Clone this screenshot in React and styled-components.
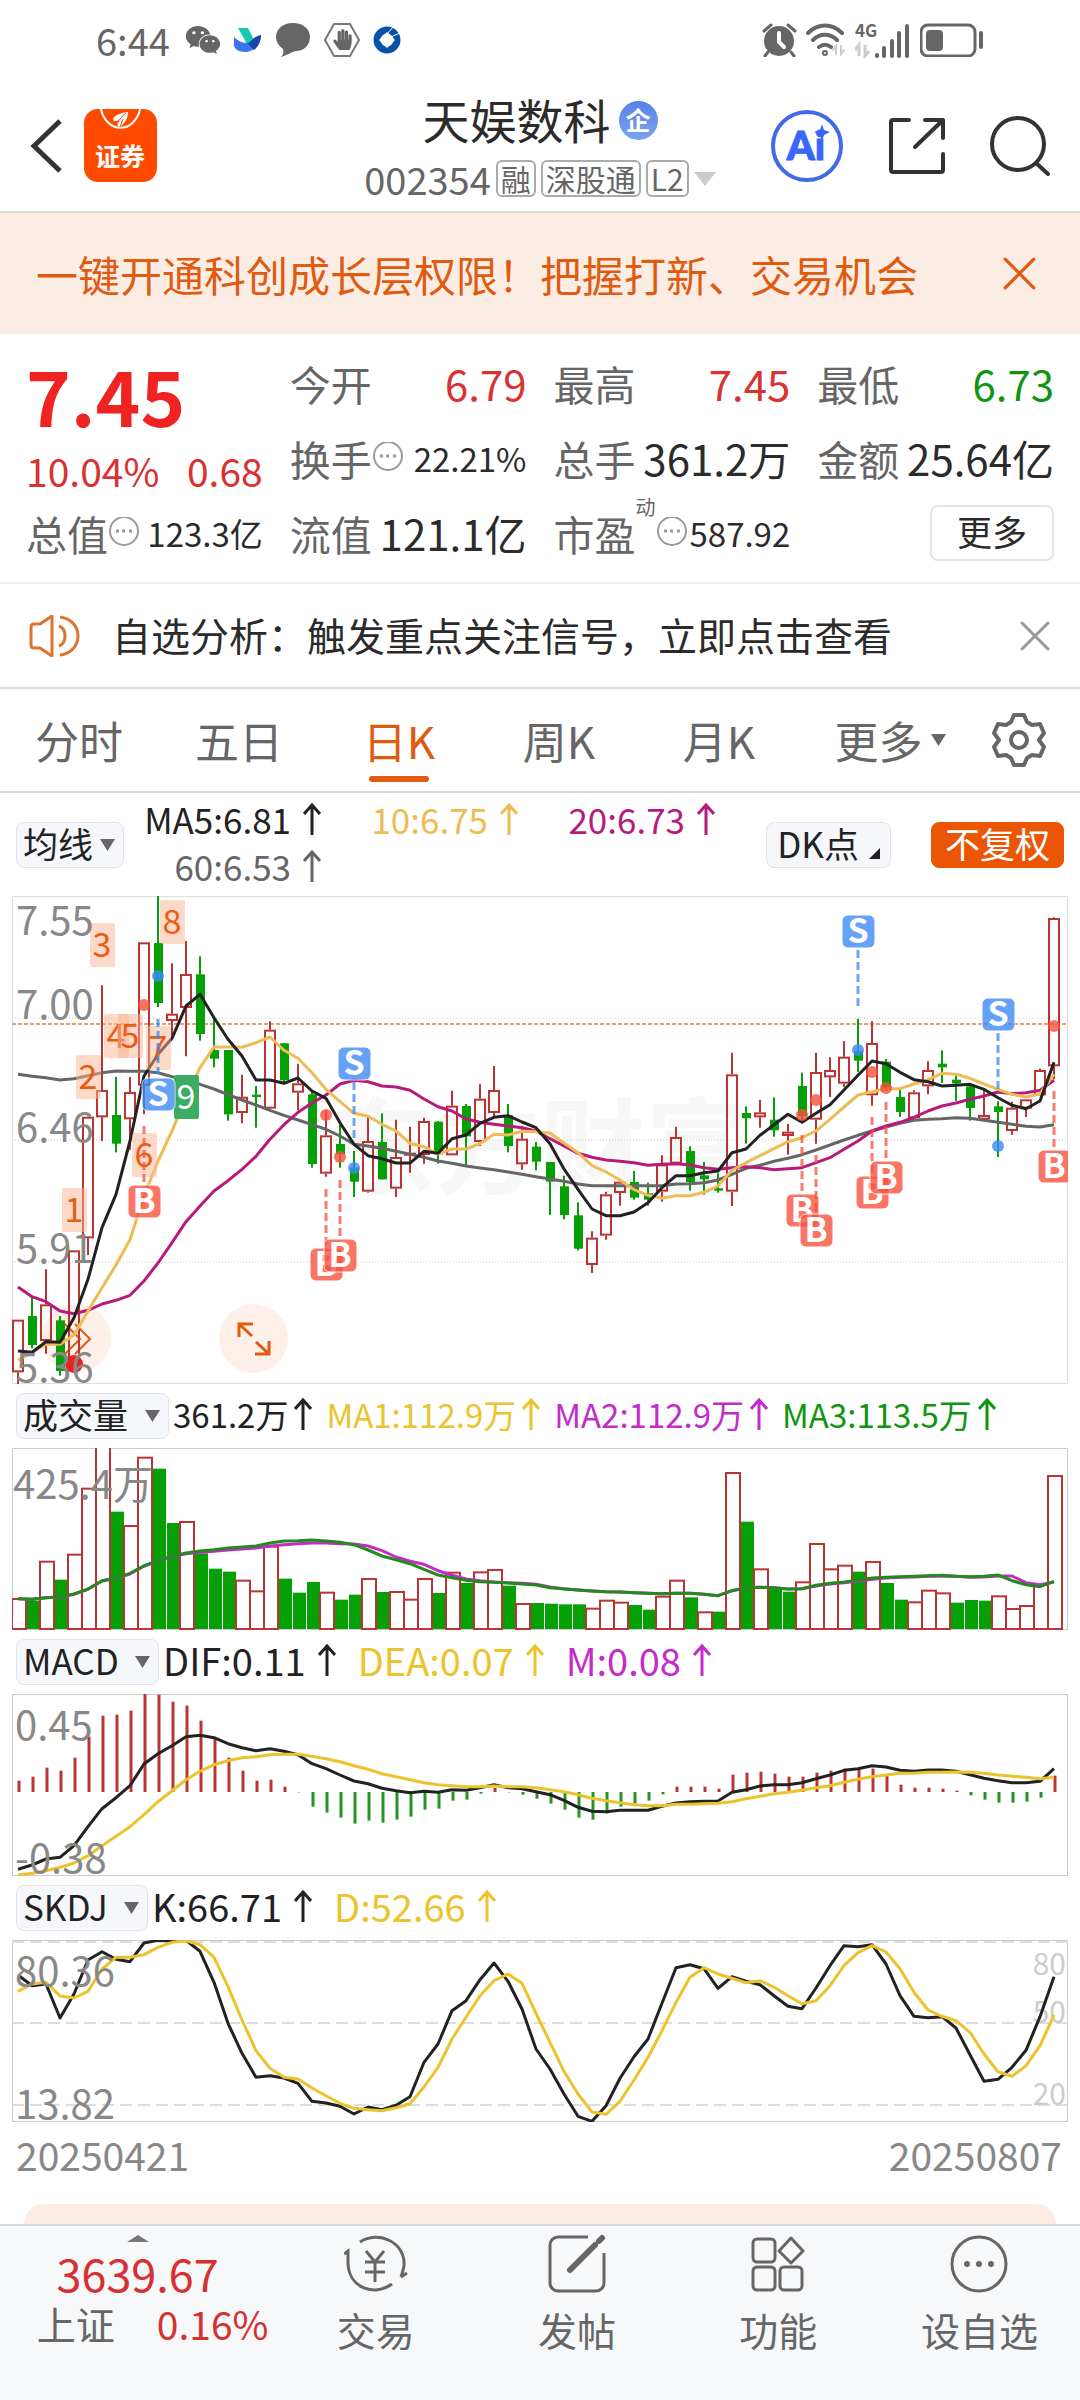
/**
 * Stock detail page: quote, daily K line and indicators
 */

import styled, { createGlobalStyle } from "styled-components";
import { FaHandPaper, FaWeixin } from "react-icons/fa";

const RED = "#bb3434";
const GREEN = "#05a005";
const ORANGE = "#e05a10";
const YELLOW = "#ecc32c";
const PURPLE = "#c32cc9";
const MAGENTA = "#b81a7c";

const GlobalStyle = createGlobalStyle`
    * {
        box-sizing: border-box;
    }

    body {
        margin: 0;
        background: #fff;
        color: #2b2b2b;
        font-family: "Noto Sans CJK SC", "Noto Sans", sans-serif;
    }

    button, select {
        margin: 0;
        padding: 0;
        border: 0;
        background: none;
        color: inherit;
        font: inherit;
        cursor: pointer;
    }

    svg {
        display: block;
        flex: none;
    }
`;

const Page = styled.div`
    display: flex;
    flex-direction: column;
    min-height: 100vh;
`;

/* ---------- status bar ---------- */

const StatusBar = styled.div`
    display: flex;
    align-items: center;
    justify-content: space-between;
    height: 80px;
    padding: 0 96px;
    color: #666;
`;

const StatusGroup = styled.div`
    display: flex;
    align-items: center;
    gap: ${(p) => p.$gap}px;
`;

const Clock = styled.span`
    margin-right: 2px;
    font-size: 38px;
    line-height: 40px;
`;

/* ---------- header ---------- */

const Header = styled.header`
    display: grid;
    grid-template-columns: 1fr auto 1fr;
    align-items: center;
    height: 133px;
    padding: 0 30px;
    border-bottom: 2px solid #dcdcdc;
`;

const HeaderSide = styled.div`
    display: flex;
    align-items: center;
    justify-content: ${(p) => (p.$end ? "flex-end" : "flex-start")};
    gap: ${(p) => (p.$end ? 44 : 22)}px;
`;

const Title = styled.div`
    display: flex;
    flex-direction: column;
    align-items: center;
    gap: 10px;
`;

const NameRow = styled.div`
    display: flex;
    align-items: center;
    gap: 8px;
`;

const Name = styled.h1`
    margin: 0;
    padding-bottom: 4px;
    font-size: 47px;
    font-weight: 400;
    line-height: 52px;
`;

const FirmBadge = styled.span`
    width: 39px;
    height: 39px;
    border-radius: 50%;
    background: linear-gradient(#5682e6, #7ba3ee);
    color: #fff;
    font-size: 25px;
    font-weight: 700;
    line-height: 37px;
    text-align: center;
`;

const CodeRow = styled.div`
    display: flex;
    align-items: center;
    gap: 5px;
    height: 40px;
    color: #666;
    font-size: 38px;
    line-height: 36px;
`;

const Tag = styled.span`
    height: 37px;
    padding: 0 3px;
    border: 2px solid #aaa;
    border-radius: 6px;
    font-size: 30px;
    line-height: 32px;
`;

/* ---------- banner and notice ---------- */

const Banner = styled.div`
    display: flex;
    align-items: center;
    justify-content: space-between;
    height: 121px;
    padding: 0 44px 0 36px;
    background: #fcede4;
    color: ${ORANGE};
    font-size: 42px;
    line-height: 60px;
`;

const Notice = styled.div`
    display: flex;
    align-items: center;
    gap: 32px;
    height: 105px;
    padding: 0 30px 0 29px;
    border-bottom: 2px solid #dedede;
    font-size: 39px;
    line-height: 52px;
`;

const NoticeText = styled.span`
    flex: 1;
    padding-bottom: 4px;
`;

/* ---------- quote ---------- */

const Quote = styled.section`
    display: grid;
    grid-template-columns: repeat(4, 1fr);
    grid-template-rows: repeat(3, 75px);
    column-gap: 27px;
    height: 250px;
    padding: 11px 26px 0;
    border-bottom: 2px solid #eee;
`;

const PriceBlock = styled.div`
    grid-row: span 2;
    display: flex;
    flex-direction: column;
`;

const Price = styled.strong`
    color: #f02222;
    font-size: 76px;
    line-height: 98px;
`;

const Change = styled.div`
    display: flex;
    justify-content: space-between;
    color: #d83232;
    font-size: 39px;
    line-height: 54px;
`;

const Cell = styled.div`
    display: flex;
    align-items: center;
    color: #666;
    font-size: 41px;
    line-height: 60px;
    white-space: nowrap;
`;

const Value = styled.span`
    margin-left: auto;
    color: ${(p) => p.$color || "#2b2b2b"};
    font-size: ${(p) => (p.$small ? 33 : 42)}px;
`;

const Sup = styled.sup`
    align-self: flex-start;
    font-size: 20px;
    line-height: 24px;
`;

const MoreButton = styled.button`
    align-self: center;
    justify-self: end;
    width: 124px;
    height: 56px;
    padding-bottom: 4px;
    border: 2px solid #e4e4e4;
    border-radius: 8px;
    font-size: 35px;
    line-height: 48px;
`;

/* ---------- period tabs ---------- */

const Tabs = styled.nav`
    display: grid;
    grid-template-columns: repeat(5, 16fr) 18fr 10fr;
    height: 104px;
    border-bottom: 2px solid #d8d8d8;
`;

const Tab = styled.button`
    display: flex;
    flex-direction: column;
    align-items: center;
    gap: 6px;
    padding: 21px 2px 0 0;
    color: ${(p) => (p.$active ? ORANGE : "#666")};
    font-size: 44px;
    line-height: 60px;

    &::after {
        content: "";
        width: 60px;
        height: 6px;
        border-radius: 3px;
        background: ${(p) => (p.$active ? ORANGE : "transparent")};
    }
`;

const MoreTab = styled.button`
    display: flex;
    align-items: center;
    justify-content: center;
    gap: 8px;
    color: #666;
    font-size: 44px;
    line-height: 60px;
`;

const GearButton = styled.button`
    display: flex;
    align-items: center;
    justify-content: center;
    padding-right: 22px;
`;

/* ---------- indicator heads ---------- */

const Chip = styled.label`
    display: flex;
    align-items: center;
    gap: ${(p) => p.$gap || 16}px;
    height: 46px;
    padding: 0 8px 0 6px;
    border: 1px solid #dfe3ea;
    border-radius: 8px;
    background: #f6f7fa;

    select {
        appearance: none;
        height: 44px;
        padding-bottom: 4px;
        color: #222;
        font-size: 35px;
        line-height: 40px;
    }
`;

const MaHead = styled.div`
    display: flex;
    align-items: center;
    height: 103px;
    padding: 0 16px;
`;

const MaGrid = styled.div`
    flex: 1;
    display: grid;
    grid-template-columns: repeat(3, 197px);
    align-items: center;
    grid-auto-rows: 47px;
    justify-items: end;
`;

const Reading = styled.span`
    display: flex;
    align-items: center;
    gap: ${(p) => p.$gap || 12}px;
    padding-bottom: 4px;
    color: ${(p) => p.$color};
    font-size: ${(p) => p.$size || 35}px;
    line-height: 44px;
    white-space: nowrap;
`;

const HeadButton = styled.button`
    display: flex;
    align-items: center;
    justify-content: center;
    gap: 10px;
    height: 46px;
    margin-left: ${(p) => (p.$solid ? 40 : 0)}px;
    padding: 0 ${(p) => (p.$solid ? 13 : 10)}px 4px;
    border: 1px solid ${(p) => (p.$solid ? "#eb5606" : "#dfe3ea")};
    border-radius: 8px;
    background: ${(p) => (p.$solid ? "#eb5606" : "#f6f7fa")};
    color: ${(p) => (p.$solid ? "#fff" : "#222")};
    font-size: 35px;
    line-height: 40px;
`;

const IndicatorHead = styled.div`
    display: flex;
    align-items: center;
    gap: ${(p) => p.$gap}px;
    height: 64px;
    padding: 0 16px;
`;

const HeadLead = styled.div`
    display: flex;
    align-items: center;
    gap: 4px;
`;

/* ---------- charts ---------- */

const ChartBox = styled.div`
    position: relative;
    margin: 0 12px;
`;

const Watermark = styled.div`
    position: absolute;
    inset: 0;
    display: flex;
    align-items: center;
    justify-content: center;
    color: #f7f7f7;
    font-size: 105px;
    font-weight: 700;
`;

// drawn over the round buttons, so clicks have to pass through
const Plot = styled.svg`
    position: relative;
    width: 100%;
    height: auto;
    pointer-events: none;
`;

const AxisText = styled.text`
    fill: ${(p) => p.$color || "#888"};
    font-size: ${(p) => p.$size || 40}px;
    text-anchor: ${(p) => (p.$end ? "end" : "start")};
`;

const MarkText = styled.text`
    fill: ${(p) => p.$color};
    font-size: 34px;
    font-weight: ${(p) => (p.$bold ? 700 : 400)};
    text-anchor: middle;
`;

const RoundButton = styled.button`
    position: absolute;
    bottom: 11px;
    left: ${(p) => p.$left}px;
    display: flex;
    align-items: center;
    justify-content: center;
    width: 69px;
    height: 69px;
    border-radius: 50%;
    background: rgba(252, 222, 203, 0.45);
`;

const Dates = styled.div`
    display: flex;
    justify-content: space-between;
    height: 82px;
    padding: 4px 18px 0 16px;
    color: #888;
    font-size: 39px;
    line-height: 56px;
`;

const CardTop = styled.div`
    flex: 1;
    min-height: 20px;
    margin: 0 24px;
    border-radius: 40px 40px 0 0;
    background: #fcede4;
`;

/* ---------- bottom bar ---------- */

const BottomBar = styled.footer`
    display: grid;
    grid-template-columns: 275fr repeat(4, 201fr);
    height: 176px;
    border-top: 2px solid #d5d7da;
    background: #f7f8fa;
    color: #666;
`;

const Index = styled.a`
    display: flex;
    flex-direction: column;
    align-items: center;
    padding-top: 9px;
    color: inherit;
    text-decoration: none;
`;

const IndexValue = styled.span`
    margin-top: 6px;
    color: #d83030;
    font-size: 45px;
    line-height: 50px;
`;

const IndexRow = styled.span`
    display: flex;
    gap: 42px;
    padding-left: 30px;
    font-size: 39px;
    line-height: 50px;

    b {
        color: #d83030;
        font-weight: 400;
    }
`;

const BarButton = styled.button`
    display: flex;
    flex-direction: column;
    align-items: center;
    gap: 7px;
    padding-top: 8px;
    font-size: 39px;
    line-height: 56px;
`;

/* ---------- small icons ---------- */

const Down = ({ w = 15, h = 12, color = "#666" }) => (
    <svg width={w} height={h} viewBox="0 0 10 10" preserveAspectRatio="none" fill={color}>
        <path d="M0 0h10L5 10z" />
    </svg>
);

const Up = () => (
    <svg width="18" height="32" viewBox="0 0 18 32" fill="none" stroke="currentColor" strokeWidth="3">
        <path d="M9 32V2M1 11l8-9 8 9" />
    </svg>
);

const Close = ({ size, color }) => (
    <svg width={size} height={size} viewBox="0 0 30 30" stroke={color} strokeWidth="3" strokeLinecap="round">
        <path d="M2 2l26 26M28 2L2 28" />
    </svg>
);

const Info = () => (
    <svg width="32" height="32" viewBox="0 0 32 32" fill="none" stroke="#999" strokeWidth="2">
        <circle cx="16" cy="14" r="14" />
        <path d="M8 14h3M14 14h3M21 14h3" strokeWidth="3" />
    </svg>
);

const Logo = () => (
    <svg width="73" height="73" viewBox="0 0 73 73">
        <rect width="73" height="73" rx="14" fill="#ff4a00" />
        <path d="M17 0a20 24 0 0 0 39 0" fill="none" stroke="#fff" strokeWidth="2" />
        <path d="M44 3c-9 1-15 4-15 8 2 2 4 1 6 0-2 3-3 6 1 7 4-3 8-8 8-15z" fill="#fff" />
        <path d="M42 4c-5 4-8 8-9 12M39 10l-3 8" stroke="#ff4a00" fill="none" />
        <text x="36" y="57" fill="#fff" fontSize="25" fontWeight="700" textAnchor="middle">证券</text>
    </svg>
);

const AiIcon = () => (
    <svg width="74" height="74" viewBox="0 0 74 74">
        <circle cx="37" cy="37" r="34" fill="none" stroke="#4269e8" strokeWidth="4" />
        <text x="36" y="51" fill="#3766fb" fontSize="40" fontWeight="900" fontFamily="Lato, sans-serif" textAnchor="middle" stroke="#3766fb">Ai</text>
        <path d="M52 15l2 6 6 2-6 3-2 6-2-6-6-3 6-2z" fill="#3766fb" />
    </svg>
);

const ShareIcon = () => (
    <svg width="58" height="58" viewBox="0 0 58 58" fill="none" stroke="#333" strokeWidth="4" strokeLinecap="round" strokeLinejoin="round">
        <path d="M21 3H5a2 2 0 0 0-2 2v48a2 2 0 0 0 2 2h48a2 2 0 0 0 2-2V37M37 3h18v18M55 3L27 30" />
    </svg>
);

const SearchIcon = () => (
    <svg width="60" height="60" viewBox="0 0 60 60" fill="none" stroke="#333" strokeWidth="4" strokeLinecap="round">
        <circle cx="28" cy="28" r="26" />
        <path d="M46 47l12 11" />
    </svg>
);

const Speaker = () => (
    <svg width="51" height="42" viewBox="0 0 51 42" fill="none" stroke="#dd7430" strokeWidth="3" strokeLinejoin="round">
        <path d="M2 12c0-2 1-3 3-3h6L23 1v40L11 33H5c-2 0-3-1-3-3zM30 11c8 3 8 17 0 20M31 2c24 3 24 35 0 38" />
    </svg>
);

const Gear = () => (
    <svg width="54" height="54" viewBox="0 0 54 54" fill="none" stroke="#666" strokeWidth="4" strokeLinejoin="round">
        <path d="M22 2h10l3 7 5 3 8-1 4 9-5 7 5 7-4 9-8-1-5 3-3 7H22l-3-7-5-3-8 1-4-9 5-7-5-7 4-9 8 1 5-3z" />
        <circle cx="27" cy="27" r="8" />
    </svg>
);

const StatusLeft = () => (
    <StatusGroup $gap={13}>
        <Clock>6:44</Clock>
        <FaWeixin size={36} />
        <svg width="28" height="24" viewBox="0 0 28 24">
            <path d="M4 0h10l6 12-7 4z" fill="#17c9b0" />
            <path d="M0 9c8 8 16 8 27-2-1 11-8 17-16 17-6 0-10-3-11-6z" fill="#3b74ee" />
            <path d="M27 7c-6 1-9 5-13 9l6 6c5-4 7-9 7-15z" fill="#1846a8" />
        </svg>
        <svg width="36" height="34" viewBox="0 0 36 34" fill="#666">
            <path d="M18 0c10 0 17 6 17 14s-6 14-14 14c-5 1-8 4-15 6 2-2 3-5 2-8-4-3-7-7-7-12C1 6 8 0 18 0z" />
        </svg>
        <svg width="36" height="36" viewBox="0 0 36 36">
            <path d="M10 2h16l9 16-9 16H10L1 18z" fill="none" stroke="#777" strokeWidth="2" />
            <FaHandPaper x="8" y="7" size={21} color="#666" />
        </svg>
        <svg width="28" height="28" viewBox="0 0 28 28">
            <circle cx="14" cy="14" r="10" fill="none" stroke="#0754a6" strokeWidth="7" />
            <path d="M14 6l8 8-8 8-8-8z" fill="#fff" />
            <path d="M14 8l7-8M18 11l9-4" stroke="#fff" />
        </svg>
    </StatusGroup>
);

const StatusRight = () => (
    <StatusGroup $gap={9}>
        <svg width="35" height="34" viewBox="0 0 35 34">
            <circle cx="17" cy="18" r="15" fill="#666" />
            <path d="M2 8l7-6M33 8l-7-6M6 29l-3 4M29 29l3 4" stroke="#666" strokeWidth="3" strokeLinecap="round" />
            <path d="M17 10v9l5 5" fill="none" stroke="#fff" strokeWidth="4" strokeLinecap="round" />
        </svg>
        <svg width="40" height="34" viewBox="0 0 40 34" fill="none" stroke="#666" strokeWidth="4" strokeLinecap="round">
            <path d="M2 10c10-10 24-10 34 0M7 17c7-7 17-7 24 0M13 24c4-3 8-3 12 0" />
            <circle cx="19" cy="30" r="1" />
            <path d="M30 31V23l-3 4M35 23v8l3-4" stroke="#ccc" strokeWidth="2" />
        </svg>
        <svg width="56" height="36" viewBox="0 -2 56 36">
            <text x="0" y="13" fill="#666" fontSize="17" fontWeight="700">4G</text>
            <path d="M4 32V21l-4 5M10 21v11l4-5" fill="none" stroke="#ccc" strokeWidth="3" />
            <path d="M22 31v1M29 24v8M37 17v15M44 9v23M52 2v30" stroke="#666" strokeWidth="4" strokeLinecap="round" />
        </svg>
        <svg width="64" height="34" viewBox="0 0 64 34">
            <rect x="1" y="2" width="54" height="31" rx="7" fill="none" stroke="#666" strokeWidth="3" />
            <rect x="6" y="7" width="17" height="21" rx="4" fill="#666" />
            <path d="M61 10v14" stroke="#666" strokeWidth="4" strokeLinecap="round" />
        </svg>
    </StatusGroup>
);

/* ---------- series, 75 trading days, 14 units apart ---------- */

const xOf = (i) => 6 + 14 * i;

// points are stored as thirds of a unit, measured from `top`
const line = (values, top) =>
    values.map((v, i) => `${xOf(i)},${((v - top) / 3).toFixed(1)}`).join(" ");

// r = up (hollow), g = down (solid): high, body top, body bottom, low
const candles = `r1316,1316,1474,1510 g1248,1305,1392,1402 r1165,1270,1380,1418 g1305,1318,1470,1484
r1108,1108,1440,1440 r707,707,1072,1122 r313,627,709,780 g588,702,788,814 r588,633,715,806 r184,184,614,700
g45,186,366,378 r247,398,420,465 r180,279,381,526 g226,280,459,479 g410,507,533,559 g507,507,700,719
r581,647,696,727 g615,641,648,740 r421,446,683,683 g487,487,598,610 r548,607,635,687 g628,640,849,860
r690,763,878,887 g730,789,820,860 g810,860,902,948 r703,780,932,935 g697,783,895,895 r716,828,923,948
r737,815,823,875 r710,720,822,848 g720,722,820,848 r629,674,823,823 g669,675,766,858 r609,653,783,795
r555,627,696,706 g669,703,795,814 r735,773,850,866 g783,797,842,868 g843,843,902,1002 g884,916,1002,1015
g964,1003,1103,1108 r1051,1070,1152,1176 r932,940,1064,1076 r902,902,936,974 g870,903,950,956 g905,937,956,974
r823,850,932,962 r737,768,848,848 g796,810,903,929 g843,883,895,941 g877,922,929,935 r515,580,932,975
g676,696,712,788 r656,694,709,740 g649,716,748,767 r729,752,765,821 g575,615,705,718 r515,573,716,788
r529,567,589,648 r481,527,608,618 g414,510,539,573 r421,486,643,674 g534,542,620,630 g627,648,693,708
r628,634,712,712 r541,567,616,640 g508,548,559,606 g580,596,607,660 g615,616,681,719 r628,702,716,716
g661,676,693,828 r662,680,750,761 r655,655,683,708 r563,567,643,643 r109,111,556,595`
    .split(/\s+/)
    .map((c) => ({ up: c[0] === "r", y: c.slice(1).split(",").map((v) => v / 3 - 15) }));

const ma5 = [1410, 1414, 1382, 1384, 1310, 1195, 1040, 940, 780, 585, 520, 472, 375, 340, 410, 475, 525, 597, 597, 607,
    591, 630, 652, 725, 790, 824, 833, 846, 846, 811, 817, 773, 762, 727, 709, 704, 723, 740, 788, 864,
    925, 984, 1004, 1004, 993, 965, 920, 884, 884, 875, 870, 815, 804, 763, 731, 700, 724, 697, 671, 627,
    583, 540, 548, 574, 596, 602, 615, 613, 610, 625, 650, 673, 683, 660, 544];
const ma10 = [1438, 1415, 1390, 1390, 1362, 1290, 1220, 1152, 1076, 945, 840, 750, 650, 560, 498, 498, 499, 485, 468, 508,
    532, 575, 625, 662, 697, 706, 730, 750, 787, 797, 819, 804, 804, 788, 760, 762, 751, 752, 756, 786,
    815, 854, 873, 897, 926, 943, 952, 944, 944, 934, 915, 868, 845, 824, 803, 782, 770, 750, 715, 678,
    642, 632, 623, 623, 609, 596, 577, 580, 592, 609, 625, 640, 648, 638, 580];
const ma20 = [1218, 1247, 1262, 1290, 1298, 1288, 1269, 1258, 1243, 1200, 1146, 1085, 1022, 975, 930, 899, 865, 826, 775, 731,
    694, 666, 642, 609, 598, 602, 615, 618, 628, 654, 677, 690, 714, 724, 730, 735, 740, 750, 773, 795,
    817, 829, 837, 841, 845, 853, 850, 848, 852, 860, 865, 860, 857, 860, 866, 863, 860, 845, 830, 805,
    780, 750, 735, 724, 709, 690, 675, 666, 655, 645, 633, 638, 635, 628, 598];
const ma60 = [580, 586, 590, 597, 593, 584, 575, 570, 571, 571, 575, 587, 598, 610, 624, 641, 657, 672, 688, 703,
    717, 731, 745, 765, 790, 795, 802, 811, 820, 829, 840, 847, 855, 861, 866, 873, 880, 887, 894, 901,
    909, 914, 914, 914, 914, 914, 914, 909, 908, 905, 897, 880, 862, 853, 841, 832, 821, 807, 792, 777,
    763, 750, 738, 727, 718, 715, 713, 710, 712, 718, 724, 730, 736, 738, 731];

const volumes = [652, 660, 540, 597, 519, 321, 190, 393, 433, 228, 264, 427, 421, 518, 564, 573, 597, 629, 495, 594,
    636, 604, 633, 657, 642, 592, 634, 631, 654, 592, 637, 573, 607, 572, 565, 615, 667, 667, 669, 671,
    671, 681, 657, 663, 673, 687, 645, 597, 650, 692, 693, 274, 423, 563, 622, 633, 602, 487, 563, 552,
    573, 541, 607, 657, 662, 627, 635, 666, 658, 660, 644, 682, 673, 610, 283];
// volume bars follow the close against the day before, so the colours differ a little from the candles
const volumeUp = [0, 2, 4, 5, 6, 8, 9, 12, 16, 17, 18, 22, 25, 27, 28, 29, 31, 33, 34, 36, 41, 42, 43, 46, 47, 49,
    51, 53, 56, 57, 58, 59, 61, 64, 65, 66, 70, 71, 72, 73, 74];
const volMa3 = [654, 656, 651, 648, 640, 625, 600, 592, 578, 555, 540, 527, 517, 511, 507, 502, 499, 496, 487, 481,
    480, 478, 481, 485, 492, 508, 526, 537, 549, 566, 583, 591, 599, 603, 605, 607, 610, 613, 621, 625,
    628, 631, 633, 634, 636, 638, 639, 638, 638, 641, 645, 630, 621, 620, 621, 625, 624, 614, 608, 604,
    599, 592, 590, 588, 587, 585, 584, 587, 588, 587, 583, 600, 612, 618, 602];
const volMa2 = [654, 656, 651, 649, 641, 626, 601, 593, 580, 557, 540, 528, 519, 515, 512, 508, 505, 502, 496, 492,
    489, 487, 487, 489, 490, 496, 510, 529, 542, 551, 570, 584, 595, 600, 604, 606, 608, 611, 619, 624,
    628, 631, 633, 634, 636, 638, 639, 638, 638, 641, 645, 630, 621, 620, 621, 625, 624, 616, 610, 606,
    602, 596, 592, 590, 589, 587, 586, 587, 590, 589, 586, 586, 606, 612, 604];

const macd = [300, 288, 261, 270, 231, 168, 105, 102, 90, 40, 42, 63, 75, 120, 173, 231, 270, 300, 297, 318,
    335, 378, 396, 411, 429, 420, 426, 417, 408, 387, 384, 360, 357, 339, 322, 335, 342, 354, 369, 387,
    411, 417, 398, 378, 368, 360, 341, 318, 318, 318, 324, 282, 276, 273, 279, 288, 288, 276, 270, 264,
    264, 264, 285, 312, 321, 321, 324, 330, 344, 357, 366, 366, 363, 351, 285];
const dif = [566, 553, 535, 530, 495, 438, 384, 351, 315, 250, 219, 195, 168, 164, 171, 189, 201, 210, 204, 212,
    222, 249, 264, 283, 301, 309, 323, 330, 336, 332, 335, 327, 329, 321, 312, 321, 324, 333, 342, 359,
    380, 392, 393, 389, 389, 389, 377, 367, 363, 362, 361, 335, 327, 316, 312, 312, 306, 294, 283, 269,
    264, 255, 259, 269, 272, 268, 268, 272, 282, 293, 300, 306, 306, 302, 264];
const dea = [583, 578, 570, 560, 547, 525, 495, 467, 438, 402, 363, 330, 297, 272, 252, 240, 231, 228, 222, 221,
    221, 227, 234, 243, 255, 266, 279, 288, 297, 306, 312, 315, 318, 318, 316, 318, 318, 321, 327, 333,
    342, 353, 360, 366, 372, 375, 375, 371, 371, 369, 368, 363, 354, 347, 339, 335, 329, 321, 315, 305,
    296, 288, 283, 278, 278, 275, 275, 274, 275, 278, 283, 287, 290, 294, 290];

const skdjK = [883, 915, 910, 1012, 940, 838, 813, 836, 843, 787, 779, 781, 779, 812, 905, 1028, 1118, 1190, 1185, 1192,
    1208, 1262, 1267, 1277, 1300, 1279, 1287, 1274, 1248, 1145, 1090, 990, 960, 897, 847, 902, 985, 1105, 1165, 1240,
    1307, 1322, 1275, 1193, 1128, 1075, 968, 861, 852, 864, 923, 888, 902, 912, 945, 977, 984, 922, 855, 795,
    798, 792, 850, 945, 1007, 1011, 1008, 1042, 1122, 1202, 1196, 1160, 1109, 1008, 888];
const skdjD = [932, 910, 905, 946, 952, 932, 865, 830, 830, 822, 800, 785, 780, 792, 830, 918, 1018, 1110, 1163, 1190,
    1195, 1222, 1245, 1268, 1283, 1287, 1290, 1281, 1269, 1219, 1160, 1075, 1010, 945, 900, 880, 908, 998, 1085, 1172,
    1240, 1294, 1301, 1262, 1198, 1130, 1050, 965, 890, 861, 880, 893, 906, 900, 920, 945, 969, 960, 915, 855,
    816, 795, 814, 864, 935, 988, 1007, 1020, 1055, 1120, 1173, 1187, 1155, 1095, 1003];

// nine-turn counts: day, top of the tag, number
const turns = [[4, 292, 1], [5, 159, 2], [6, 27, 3], [7, 118, 4], [8, 118, 5], [9, 237, 6], [10, 130, 7], [11, 4, 8], [12, 179, 9]];

// trade marks: day, kind, badge centre, signal dot, dashed line from / to
const marks = [
    [9, "B", 305, 109, 230, 287],
    [10, "S", 198, 80, 123, 178],
    [22, "B", 368, 219, 293, 350],
    [23, "B", 359, 261, 284, 340],
    [24, "S", 167, 272, 186, 244],
    [56, "B", 314, 219, 239, 296],
    [57, "B", 334, 204, 259, 316],
    [60, "S", 35, 154, 54, 111],
    [61, "B", 296, 176, 221, 278],
    [62, "B", 281, 192, 206, 263],
    [70, "S", 118, 250, 137, 194],
    [74, "B", 270, 130, 195, 252],
];

const Candle = ({ i, up, y: [high, top, bottom, low] }) => {
    const x = xOf(i);
    if (!up) {
        return (
            <g fill={GREEN}>
                <rect x={x - 1} y={high} width="2" height={low - high} />
                <rect x={x - 4} y={top} width="9" height={bottom - top} />
            </g>
        );
    }
    return (
        <g fill="none" stroke={RED} strokeWidth="2">
            <path d={`M${x} ${high}V${top}M${x} ${bottom}V${low}`} />
            <rect x={x - 5} y={top + 1} width="10" height={Math.max(bottom - top - 2, 1)} />
        </g>
    );
};

const Mark = ({ mark: [i, kind, y, dot, from, to] }) => {
    const x = xOf(i);
    const color = kind === "B" ? "#f8503c" : "#3b88f5";
    return (
        <g>
            <circle cx={x} cy={dot} r="6" fill={color} opacity="0.8" />
            <path d={`M${x} ${from}V${to}`} stroke={color} strokeWidth="3" strokeDasharray="8 4" opacity="0.75" />
            <rect x={x - 16} y={y - 16} width="33" height="33" rx="6" fill={color} stroke="#fff" strokeWidth="1" opacity="0.78" />
            <MarkText x={x} y={y + 12} $color="#fff" $bold>{kind}</MarkText>
        </g>
    );
};

const Curve = ({ data, top, color }) => (
    <polyline points={line(data, top)} fill="none" stroke={color} strokeWidth="3" strokeLinejoin="round" />
);

const Frame = ({ h, color = "#ccc" }) => (
    <rect x="0.5" y="0.5" width="1055" height={h - 1} fill="none" stroke={color} />
);

const PriceChart = () => (
    <ChartBox>
        <Watermark>东方财富</Watermark>
        <RoundButton $left={30} aria-label="展开">
            <svg width="38" height="38" viewBox="0 0 38 38" fill="none" stroke={ORANGE} strokeWidth="2">
                <path d="M7 4l15 15L7 34M17 4l15 15-15 15" />
            </svg>
        </RoundButton>
        <RoundButton $left={207} aria-label="全屏">
            <svg width="38" height="38" viewBox="0 0 38 38" fill="none" stroke={ORANGE} strokeWidth="3">
                <path d="M4 17V4h14M4 4l13 12M34 21v13H20M34 34L21 22" />
            </svg>
        </RoundButton>
        <Plot viewBox="0 0 1056 488">
            <Frame h={488} color="#dedede" />
            <path d="M0 122H1056M0 244H1056M0 366H1056" stroke="#ccc" strokeDasharray="1 2" />
            <path d="M0 128H1056" stroke="#e0a070" strokeWidth="2" strokeDasharray="4 2" />
            {candles.map((c, i) => <Candle key={i} i={i} {...c} />)}
            <Curve data={ma60} top={45} color="#666" />
            <Curve data={ma20} top={45} color={MAGENTA} />
            <Curve data={ma10} top={45} color="#efbb54" />
            <Curve data={ma5} top={45} color="#222" />
            <circle cx="62" cy="468" r="9" fill="#f02020" />
            {turns.map(([i, y, n]) => (
                <g key={n}>
                    <rect x={xOf(i) - 12} y={y} width="25" height="44" rx="2" fill={n === 9 ? "#3bac62" : "#fbb491"} opacity={n === 9 ? 1 : 0.5} />
                    <MarkText x={xOf(i)} y={y + 34} $color={n === 9 ? "#fff" : "#e85c14"}>{n}</MarkText>
                </g>
            ))}
            {marks.map((m) => <Mark key={m[0]} mark={m} />)}
            <AxisText x="4" y="39">7.55</AxisText>
            <AxisText x="4" y="123">7.00</AxisText>
            <AxisText x="4" y="246">6.46</AxisText>
            <AxisText x="4" y="367">5.91</AxisText>
            <AxisText x="4" y="486">5.36</AxisText>
        </Plot>
    </ChartBox>
);

const VolumeChart = () => (
    <ChartBox>
        <Plot viewBox="0 0 1056 182">
            <Frame h={182} />
            {volumes.map((v, i) => {
                const y = (v - 202) / 3;
                return volumeUp.includes(i) ? (
                    <rect key={i} x={xOf(i) - 6} y={y + 1} width="14" height={180 - y} fill="#fff" stroke={RED} strokeWidth="2" />
                ) : (
                    <rect key={i} x={xOf(i) - 5} y={y} width="13" height={181 - y} fill={GREEN} />
                );
            })}
            <Curve data={volMa2} top={202} color={PURPLE} />
            <Curve data={volMa3} top={202} color="#258a1e" />
            <AxisText x="1" y="51">425.4万</AxisText>
        </Plot>
    </ChartBox>
);

const MacdChart = () => (
    <ChartBox>
        <Plot viewBox="0 0 1056 182">
            <Frame h={182} />
            {macd.map((v, i) => (
                <path key={i} d={`M${xOf(i) + 1} 98V${(v - 40) / 3}`} stroke={v < 332 ? RED : "#259425"} strokeWidth="3" />
            ))}
            <Curve data={dif} top={40} color="#222" />
            <Curve data={dea} top={40} color={YELLOW} />
            <AxisText x="3" y="46">0.45</AxisText>
            <AxisText x="3" y="179">-0.38</AxisText>
        </Plot>
    </ChartBox>
);

const SkdjChart = () => (
    <ChartBox>
        <Plot viewBox="0 0 1056 182">
            <Frame h={182} />
            <path d="M0 2H1056M0 83H1056M0 165H1056" stroke="#ddd" strokeWidth="2" strokeDasharray="12 6" />
            <AxisText x="1054" y="35" $size={30} $color="#ccc" $end>80</AxisText>
            <AxisText x="1054" y="83" $size={30} $color="#ccc" $end>50</AxisText>
            <AxisText x="1054" y="165" $size={30} $color="#ccc" $end>20</AxisText>
            <Curve data={skdjK} top={778} color="#222" />
            <Curve data={skdjD} top={778} color={YELLOW} />
            <AxisText x="3" y="46">80.36</AxisText>
            <AxisText x="3" y="179">13.82</AxisText>
        </Plot>
    </ChartBox>
);

const Picker = ({ name, gap }) => (
    <Chip $gap={gap}>
        <select aria-label={name} defaultValue={name}>
            <option>{name}</option>
        </select>
        <Down />
    </Chip>
);

const Arrowed = ({ color, size, gap, children }) => (
    <Reading $color={color} $size={size} $gap={gap}>
        {children}
        <Up />
    </Reading>
);

const App = () => {
    return (
        <Page>
            <GlobalStyle />
            <StatusBar>
                <StatusLeft />
                <StatusRight />
            </StatusBar>

            <Header>
                <HeaderSide>
                    <button aria-label="返回">
                        <svg width="32" height="54" viewBox="0 0 32 54" fill="none" stroke="#333" strokeWidth="5">
                            <path d="M30 2L4 27l26 25" />
                        </svg>
                    </button>
                    <Logo />
                </HeaderSide>
                <Title>
                    <NameRow>
                        <Name>天娱数科</Name>
                        <FirmBadge>企</FirmBadge>
                    </NameRow>
                    <CodeRow>
                        002354
                        <Tag>融</Tag>
                        <Tag>深股通</Tag>
                        <Tag>L2</Tag>
                        <Down w={22} h={14} color="#ccc" />
                    </CodeRow>
                </Title>
                <HeaderSide $end>
                    <button aria-label="AI"><AiIcon /></button>
                    <button aria-label="分享"><ShareIcon /></button>
                    <button aria-label="搜索"><SearchIcon /></button>
                </HeaderSide>
            </Header>

            <Banner>
                <span>一键开通科创成长层权限！把握打新、交易机会</span>
                <button aria-label="关闭"><Close size={33} color={ORANGE} /></button>
            </Banner>

            <Quote>
                <PriceBlock>
                    <Price>7.45</Price>
                    <Change><span>10.04%</span><span>0.68</span></Change>
                </PriceBlock>
                <Cell>今开<Value $color="#d83232">6.79</Value></Cell>
                <Cell>最高<Value $color="#d83232">7.45</Value></Cell>
                <Cell>最低<Value $color="#109510">6.73</Value></Cell>
                <Cell>换手<Info /><Value $small>22.21%</Value></Cell>
                <Cell>总手<Value>361.2万</Value></Cell>
                <Cell>金额<Value>25.64亿</Value></Cell>
                <Cell>总值<Info /><Value $small>123.3亿</Value></Cell>
                <Cell>流值<Value>121.1亿</Value></Cell>
                <Cell>市盈<Sup>动</Sup><Info /><Value $small>587.92</Value></Cell>
                <MoreButton>更多</MoreButton>
            </Quote>

            <Notice>
                <Speaker />
                <NoticeText>自选分析：触发重点关注信号，立即点击查看</NoticeText>
                <button aria-label="关闭"><Close size={30} color="#999" /></button>
            </Notice>

            <Tabs>
                <Tab>分时</Tab>
                <Tab>五日</Tab>
                <Tab $active>日K</Tab>
                <Tab>周K</Tab>
                <Tab>月K</Tab>
                <MoreTab>更多<Down /></MoreTab>
                <GearButton aria-label="设置"><Gear /></GearButton>
            </Tabs>

            <MaHead>
                <Picker name="均线" gap={6} />
                <MaGrid>
                    <Arrowed color="#222">MA5:6.81</Arrowed>
                    <Arrowed color="#efbb54">10:6.75</Arrowed>
                    <Arrowed color={MAGENTA}>20:6.73</Arrowed>
                    <Arrowed color="#666">60:6.53</Arrowed>
                </MaGrid>
                <HeadButton>
                    DK点
                    <svg width="11" height="32" viewBox="0 0 11 32" fill="#222"><path d="M11 21v11H0z" /></svg>
                </HeadButton>
                <HeadButton $solid>不复权</HeadButton>
            </MaHead>
            <PriceChart />

            <IndicatorHead $gap={14}>
                <HeadLead>
                    <Picker name="成交量" />
                    <Arrowed color="#222" size={33} gap={6}>361.2万</Arrowed>
                </HeadLead>
                <Arrowed color={YELLOW} size={33} gap={6}>MA1:112.9万</Arrowed>
                <Arrowed color={PURPLE} size={33} gap={6}>MA2:112.9万</Arrowed>
                <Arrowed color="#109510" size={33} gap={6}>MA3:113.5万</Arrowed>
            </IndicatorHead>
            <VolumeChart />

            <IndicatorHead $gap={22}>
                <HeadLead>
                    <Picker name="MACD" />
                    <Arrowed color="#222" size={38}>DIF:0.11</Arrowed>
                </HeadLead>
                <Arrowed color={YELLOW} size={38}>DEA:0.07</Arrowed>
                <Arrowed color={PURPLE} size={38}>M:0.08</Arrowed>
            </IndicatorHead>
            <MacdChart />

            <IndicatorHead $gap={22}>
                <HeadLead>
                    <Picker name="SKDJ" />
                    <Arrowed color="#222" size={38}>K:66.71</Arrowed>
                </HeadLead>
                <Arrowed color={YELLOW} size={38}>D:52.66</Arrowed>
            </IndicatorHead>
            <SkdjChart />

            <Dates>
                <span>20250421</span>
                <span>20250807</span>
            </Dates>
            <CardTop />

            <BottomBar>
                <Index href="#index">
                    <svg width="22" height="7" viewBox="0 0 22 7" fill="#777"><path d="M11 0l11 7H0z" /></svg>
                    <IndexValue>3639.67</IndexValue>
                    <IndexRow>上证<b>0.16%</b></IndexRow>
                </Index>
                <BarButton>
                    <svg width="64" height="60" viewBox="0 0 64 60" fill="none" stroke="#666" strokeWidth="3">
                        <path d="M16 8c18-12 46 0 44 24-1 5-2 8-3 11M48 50C30 63 4 54 4 28V17l-4 3M57 43l6-4" />
                        <path d="M22 17l9 11 9-11M31 28v20M21 28h20M21 38h20" />
                    </svg>
                    交易
                </BarButton>
                <BarButton>
                    <svg width="58" height="60" viewBox="0 0 58 60" fill="none" stroke="#666" strokeWidth="3">
                        <path d="M40 3H10a8 8 0 0 0-8 8v38a8 8 0 0 0 8 8h38a8 8 0 0 0 8-8V19" />
                        <path d="M22 36l25-25M51 7l3-3" strokeWidth="6" strokeLinecap="round" />
                    </svg>
                    发帖
                </BarButton>
                <BarButton>
                    <svg width="54" height="60" viewBox="0 0 54 60" fill="none" stroke="#666" strokeWidth="3" strokeLinejoin="round">
                        <rect x="2" y="5" width="22" height="23" rx="4" />
                        <rect x="2" y="33" width="22" height="23" rx="4" />
                        <rect x="29" y="33" width="22" height="23" rx="4" />
                        <path d="M40 4l12 13-12 12-12-12z" />
                    </svg>
                    功能
                </BarButton>
                <BarButton>
                    <svg width="58" height="60" viewBox="0 0 58 60" fill="none" stroke="#666" strokeWidth="3">
                        <circle cx="29" cy="30" r="27" />
                        <path d="M17 30h0M29 30h0M41 30h0" strokeWidth="6" strokeLinecap="round" />
                    </svg>
                    设自选
                </BarButton>
            </BottomBar>
        </Page>
    );
};

export default App;
